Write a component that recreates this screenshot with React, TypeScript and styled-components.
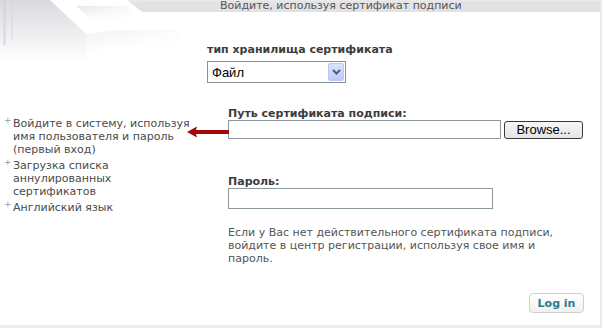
import React from 'react';
import styled, { createGlobalStyle } from 'styled-components';

const GlobalStyle = createGlobalStyle`
  html, body {
    margin: 0;
    padding: 0;
    background: #ffffff;
  }
  body {
    font-family: "DejaVu Sans", Verdana, sans-serif;
  }
`;

const links = [
  'Войдите в систему, используя имя пользователя и пароль (первый вход)',
  'Загрузка списка аннулированных сертификатов',
  'Английский язык',
];

const App = () => {
  return (
    <>
      <GlobalStyle />
      <Page>
        <Decoration width="200" height="70" viewBox="0 0 200 70">
          <defs>
            <linearGradient id="fade" x1="0" y1="0" x2="0" y2="1">
              <stop offset="0" stopColor="#d9dadf" />
              <stop offset="1" stopColor="#ffffff" />
            </linearGradient>
            <linearGradient id="fade2" x1="0" y1="0" x2="1" y2="1">
              <stop offset="0" stopColor="#e6e7eb" />
              <stop offset="1" stopColor="#ffffff" stopOpacity="0" />
            </linearGradient>
          </defs>
          <polygon points="0,0 50,0 86,34 86,62 0,62" fill="url(#fade)" />
          <rect x="3" y="0" width="3" height="45" fill="#d2d3d8" opacity="0.6" />
          <rect x="11" y="0" width="2" height="40" fill="#d6d7dc" opacity="0.5" />
          <polygon points="76,6 128,6 140,20 92,20" fill="url(#fade2)" />
          <polygon points="86,34 120,30 180,30 180,45 86,50" fill="url(#fade2)" opacity="0.6" />
        </Decoration>

        <HeaderBar>Войдите, используя сертификат подписи</HeaderBar>

        <Content>
          <Sidebar>
            {links.map((text) => (
              <LinkItem key={text}>
                <Bullet>+</Bullet>
                <LinkText>{text}</LinkText>
              </LinkItem>
            ))}
          </Sidebar>

          <Main>
            <StoreBlock>
              <Label>тип хранилища сертификата</Label>
              <SelectBox>
                <SelectValue>Файл</SelectValue>
                <SelectButton>
                  <svg width="9" height="6" viewBox="0 0 9 6">
                    <path d="M1 1 L4.5 4.5 L8 1" fill="none" stroke="#4a5c86" strokeWidth="2" />
                  </svg>
                </SelectButton>
              </SelectBox>
            </StoreBlock>

            <FormBlock>
              <Field $top={24}>
                <Label>Путь сертификата подписи:</Label>
                <FileRow>
                  <TextInput $width={273} $height={19} />
                  <BrowseButton>Browse...</BrowseButton>
                </FileRow>
              </Field>

              <Field $top={36}>
                <Label>Пароль:</Label>
                <TextInput type="password" $width={265} $height={21} />
              </Field>

              <Note>
                Если у Вас нет действительного сертификата подписи, войдите в центр регистрации,
                используя свое имя и пароль.
              </Note>

              <Actions>
                <LoginButton>Log in</LoginButton>
              </Actions>
            </FormBlock>
          </Main>
        </Content>

        <PointerArrow width="42" height="14" viewBox="0 0 42 14">
          <path d="M0 7 L10 1.5 L9 5 L42 5 L42 9 L9 9 L10 12.5 Z" fill="#a10808" />
        </PointerArrow>
      </Page>
    </>
  );
};

export default App;

const Page = styled.div`
  position: relative;
  box-sizing: border-box;
  width: 602px;
  height: 328px;
  overflow: hidden;
  background: #ffffff;
  border-right: 2px solid #e9e9ec;
  border-bottom: 3px solid #eeeef0;
`;

const Decoration = styled.svg`
  position: absolute;
  left: 0;
  top: 0;
  z-index: 0;
`;

const HeaderBar = styled.div`
  position: relative;
  z-index: 1;
  height: 12px;
  margin-left: 127px;
  padding-left: 93px;
  background: linear-gradient(#ececee 0, #e3e3e5 2px, #e1e1e3 100%);
  clip-path: polygon(0 0, 100% 0, 100% 100%, 15px 100%);
  color: #555555;
  font-size: 11px;
  line-height: 11px;
  white-space: nowrap;
`;

const Content = styled.div`
  position: relative;
  z-index: 1;
  display: flex;
`;

const Sidebar = styled.ul`
  width: 207px;
  flex: none;
  box-sizing: border-box;
  margin: 0;
  padding: 105px 0 0 4px;
  list-style: none;
  display: flex;
  flex-direction: column;
  gap: 3px;
`;

const LinkItem = styled.li`
  display: flex;
  gap: 3px;
`;

const Bullet = styled.span`
  width: 6px;
  flex: none;
  color: #9a9a9a;
  font-size: 9px;
  line-height: 9px;
  margin-top: -1px;
`;

const LinkText = styled.span`
  width: 184px;
  color: #4a4a4a;
  font-size: 11px;
  line-height: 13px;
`;

const Main = styled.div`
  width: 377px;
  display: flex;
  flex-direction: column;
`;

const StoreBlock = styled.div`
  display: flex;
  flex-direction: column;
  gap: 5px;
  padding-top: 31px;
`;

const Label = styled.div`
  color: #3c3c3c;
  font-size: 11px;
  font-weight: bold;
  line-height: 13px;
`;

const SelectBox = styled.div`
  box-sizing: border-box;
  width: 139px;
  height: 22px;
  display: flex;
  align-items: center;
  justify-content: space-between;
  border: 1px solid #8a9199;
  padding: 0 1px 0 4px;
  background: #ffffff;
`;

const SelectValue = styled.span`
  font-family: "Liberation Sans", Arial, sans-serif;
  font-size: 13px;
  color: #000000;
`;

const SelectButton = styled.span`
  box-sizing: border-box;
  width: 16px;
  height: 18px;
  display: flex;
  align-items: center;
  justify-content: center;
  border: 1px solid #b9c9ef;
  border-radius: 2px;
  background: linear-gradient(#d9e4fc, #bccbf4);
`;

const FormBlock = styled.div`
  margin-left: 21px;
  display: flex;
  flex-direction: column;
`;

const Field = styled.div<{ $top: number }>`
  display: flex;
  flex-direction: column;
  margin-top: ${({ $top }) => $top}px;
`;

const FileRow = styled.div`
  display: flex;
  align-items: center;
  gap: 3px;
`;

const TextInput = styled.input<{ $width: number; $height: number }>`
  box-sizing: border-box;
  width: ${({ $width }) => $width}px;
  height: ${({ $height }) => $height}px;
  margin: 0;
  padding: 0 3px;
  border: 1px solid #8b989f;
  background: #ffffff;
  outline: none;
`;

const BrowseButton = styled.button`
  box-sizing: border-box;
  width: 79px;
  height: 18px;
  margin: 0;
  padding: 0;
  border: 1px solid #3a3a3a;
  border-radius: 3px;
  background: linear-gradient(#f7f7f7, #e4e4e4);
  font-family: "Liberation Sans", Arial, sans-serif;
  font-size: 13px;
  line-height: 16px;
  color: #000000;
`;

const Note = styled.p`
  width: 330px;
  margin: 17px 0 0;
  color: #555555;
  font-size: 11px;
  line-height: 13px;
`;

const Actions = styled.div`
  display: flex;
  justify-content: flex-end;
  margin-top: 28px;
`;

const LoginButton = styled.button`
  box-sizing: border-box;
  width: 55px;
  height: 20px;
  margin: 0;
  padding: 0;
  border: 1px solid #cfcfcf;
  border-radius: 4px;
  background: linear-gradient(#ffffff, #f1f1f1);
  font-family: "DejaVu Sans", Verdana, sans-serif;
  font-size: 11px;
  font-weight: bold;
  color: #2b7b8a;
`;

const PointerArrow = styled.svg`
  position: absolute;
  left: 187px;
  top: 125px;
  z-index: 2;
`;
